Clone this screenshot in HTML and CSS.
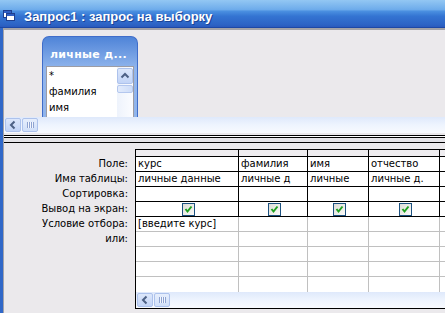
FILE: index.html
```html
<!DOCTYPE html>
<html lang="ru">
  <head>
    <meta charset="UTF-8" />
    <title>Запрос1 : запрос на выборку</title>
    <link rel="stylesheet" href="styles.css">
  </head>
  <body>
    <div class="win">
      <div class="titlebar">
        <svg class="ticon" viewBox="0 0 16 16" width="16" height="16">
          <rect x="0.5" y="2.5" width="8" height="7" fill="#fff" stroke="#1f3f8f" />
          <rect x="1" y="3" width="7" height="2" fill="#2f5fc4" />
          <rect x="3.5" y="5.5" width="8" height="7" fill="#fff" stroke="#1f3f8f" />
          <rect x="4" y="6" width="7" height="2" fill="#2f5fc4" />
        </svg>
        <span class="ttext">Запрос1 : запрос на выборку</span>
      </div>

      <div class="client">
        <div class="inner">
          <!-- таблицы -->
          <div class="tables">
            <div class="fieldlist">
              <div class="fl-head">личные д...</div>
              <div class="fl-body">
                <ul class="fl-items">
                  <li>*</li>
                  <li>фамилия</li>
                  <li>имя</li>
                </ul>
                <div class="vscroll">
                  <div class="sbtn up">
                    <svg viewBox="0 0 14 14" width="14" height="14"><polyline points="3.5,8.5 7,5 10.5,8.5" fill="none" stroke="#4d6185" stroke-width="2" /></svg>
                  </div>
                  <div class="vthumb"></div>
                </div>
              </div>
            </div>
          </div>

          <div class="hscroll">
            <div class="sbtn">
              <svg viewBox="0 0 14 12" width="14" height="12"><polyline points="8.5,2.5 5,6 8.5,9.5" fill="none" stroke="#4d6185" stroke-width="2" /></svg>
            </div>
            <div class="sthumb"><span class="grip"></span></div>
          </div>

          <div class="split"><div class="split-bar"></div></div>

          <!-- бланк запроса -->
          <div class="design">
            <div class="labels">
              <div class="lbl">Поле:</div>
              <div class="lbl">Имя таблицы:</div>
              <div class="lbl">Сортировка:</div>
              <div class="lbl">Вывод на экран:</div>
              <div class="lbl">Условие отбора:</div>
              <div class="lbl">или:</div>
            </div>
            <div class="grid">
              <div class="cells">
                <div class="row head">
                  <div class="cell c1"></div><div class="cell c2"></div><div class="cell c3"></div><div class="cell c4"></div><div class="cell c5"></div>
                </div>
                <div class="row">
                  <div class="cell c1">курс</div><div class="cell c2">фамилия</div><div class="cell c3">имя</div><div class="cell c4">отчество</div><div class="cell c5"></div>
                </div>
                <div class="row">
                  <div class="cell c1">личные данные</div><div class="cell c2">личные д</div><div class="cell c3">личные</div><div class="cell c4">личные д.</div><div class="cell c5"></div>
                </div>
                <div class="row">
                  <div class="cell c1"></div><div class="cell c2"></div><div class="cell c3"></div><div class="cell c4"></div><div class="cell c5"></div>
                </div>
                <div class="row">
                  <div class="cell c1"><span class="chk"><svg viewBox="0 0 11 11" width="11" height="11"><polyline points="2.5,5 4.5,7.5 8.5,2.5" fill="none" stroke="#21a121" stroke-width="2" /></svg></span></div>
                  <div class="cell c2"><span class="chk"><svg viewBox="0 0 11 11" width="11" height="11"><polyline points="2.5,5 4.5,7.5 8.5,2.5" fill="none" stroke="#21a121" stroke-width="2" /></svg></span></div>
                  <div class="cell c3"><span class="chk"><svg viewBox="0 0 11 11" width="11" height="11"><polyline points="2.5,5 4.5,7.5 8.5,2.5" fill="none" stroke="#21a121" stroke-width="2" /></svg></span></div>
                  <div class="cell c4"><span class="chk"><svg viewBox="0 0 11 11" width="11" height="11"><polyline points="2.5,5 4.5,7.5 8.5,2.5" fill="none" stroke="#21a121" stroke-width="2" /></svg></span></div>
                  <div class="cell c5"></div>
                </div>
                <div class="row g">
                  <div class="cell c1">[введите курс]</div><div class="cell c2"></div><div class="cell c3"></div><div class="cell c4"></div><div class="cell c5"></div>
                </div>
                <div class="row g">
                  <div class="cell c1"></div><div class="cell c2"></div><div class="cell c3"></div><div class="cell c4"></div><div class="cell c5"></div>
                </div>
                <div class="row g">
                  <div class="cell c1"></div><div class="cell c2"></div><div class="cell c3"></div><div class="cell c4"></div><div class="cell c5"></div>
                </div>
                <div class="row g">
                  <div class="cell c1"></div><div class="cell c2"></div><div class="cell c3"></div><div class="cell c4"></div><div class="cell c5"></div>
                </div>
                <div class="row g last">
                  <div class="cell c1"></div><div class="cell c2"></div><div class="cell c3"></div><div class="cell c4"></div><div class="cell c5"></div>
                </div>
              </div>
              <div class="hscroll gscroll">
                <div class="sbtn">
                  <svg viewBox="0 0 14 12" width="14" height="12"><polyline points="8.5,2.5 5,6 8.5,9.5" fill="none" stroke="#4d6185" stroke-width="2" /></svg>
                </div>
                <div class="sthumb"><span class="grip"></span></div>
              </div>
            </div>
          </div>
        </div>
      </div>
    </div>
  </body>
</html>
```

FILE: styles.css
```css
* {
  margin: 0;
  padding: 0;
  box-sizing: border-box;
}
body {
  width: 445px;
  height: 313px;
  overflow: hidden;
  background: #ebe9ec;
  font-family: "DejaVu Sans", sans-serif;
  font-size: 10px;
  color: #000;
}
.win {
  width: 445px;
  height: 313px;
  overflow: hidden;
  display: flex;
  flex-direction: column;
}

/* заголовок окна */
.titlebar {
  flex: none;
  height: 28px;
  display: flex;
  align-items: center;
  padding: 5px 0 0 3px;
  border-bottom: 1px solid #1d48a6;
  background: linear-gradient(to bottom, #93c7f3 0, #6eaceb 35%, #4a8fe0 42%, #3474d2 60%, #2d64c6 90%, #2a5abd 100%);
}
.ticon {
  flex: none;
  margin-right: 5px;
}
.ttext {
  color: #fff;
  font: bold 13px "Liberation Sans", sans-serif;
  white-space: nowrap;
  text-shadow: 1px 1px 0 #1a4396;
}

.client {
  flex: 1;
  min-height: 0;
  display: flex;
  border-left: 3px solid #3068c8;
}
.inner {
  flex: 1;
  min-width: 0;
  display: flex;
  flex-direction: column;
  border-top: 2px solid #a4a3a8;
  border-left: 1px solid #a4a3a8;
}

/* область таблиц */
.tables {
  flex: none;
  height: 87px;
  overflow: hidden;
  padding: 6px 0 0 38px;
}
.fieldlist {
  width: 96px;
  height: 120px;
  padding: 0 3px;
  border: 1px solid #3f6dca;
  border-bottom: none;
  border-radius: 7px 7px 0 0;
  background: linear-gradient(to bottom, #4f84d8 0, #78a3e5 20px, #91b5ec 32px, #8fb3ea 100%);
}
.fl-head {
  height: 29px;
  padding: 11px 0 0 4px;
  color: #fff;
  font-weight: bold;
  font-size: 11px;
  letter-spacing: 0.3px;
  white-space: nowrap;
  overflow: hidden;
}
.fl-body {
  display: flex;
  height: 80px;
  background: #fff;
  border: 1px solid #9c9ca4;
}
.fl-items {
  flex: 1;
  list-style: none;
  padding: 1px 0 0 2px;
  line-height: 16px;
}
.vscroll {
  flex: none;
  width: 16px;
  background: linear-gradient(to right, #eef3fc, #fbfcff);
}
.sbtn {
  flex: none;
  width: 16px;
  height: 14px;
  display: flex;
  align-items: center;
  justify-content: center;
  border: 1px solid #adc2ec;
  border-radius: 2px;
  background: linear-gradient(to bottom, #dce7fb, #c2d4f7);
}
.sbtn.up {
  height: 16px;
  margin-top: 1px;
}
.vthumb {
  height: 8px;
  margin-top: 1px;
  border: 1px solid #b4c7ee;
  border-radius: 2px;
  background: linear-gradient(to right, #e2ebfc, #cddcf8);
}

/* горизонтальная прокрутка */
.hscroll {
  flex: none;
  height: 16px;
  display: flex;
  align-items: center;
  gap: 1px;
  padding-left: 1px;
  background: linear-gradient(to bottom, #dfe9fb, #eef4fe 50%, #f8fafe);
}
.sthumb {
  flex: none;
  width: 16px;
  height: 14px;
  display: flex;
  align-items: center;
  justify-content: center;
  border: 1px solid #adc2ec;
  border-radius: 2px;
  background: linear-gradient(to bottom, #e6eefc, #d0dff9);
}
.grip {
  width: 7px;
  height: 6px;
  background: repeating-linear-gradient(to right, #8ea3d1 0 1px, #f4f7fe 1px 2px);
}

/* разделитель */
.split {
  flex: none;
  margin-top: 2px;
  padding-top: 1px;
  border-top: 1px solid #000;
  background: #fff;
}
.split-bar {
  height: 6px;
  border-top: 1px solid #000;
  border-bottom: 1px solid #000;
  background: #e4e3e7;
}

/* бланк */
.design {
  flex: 1;
  min-height: 0;
  display: flex;
  padding-top: 6px;
  overflow: hidden;
}
.labels {
  flex: none;
  width: 131px;
  padding: 8px 7px 0 0;
  text-align: right;
}
.lbl {
  height: 15px;
  line-height: 14px;
  white-space: nowrap;
}
.grid {
  flex: none;
  width: 420px;
  height: 160px;
  display: flex;
  flex-direction: column;
  border: 1px solid #000;
  border-right: none;
}
.cells {
  height: 142px;
  overflow: hidden;
  background: #fff;
}
.row {
  display: flex;
  height: 15px;
  border-bottom: 1px solid #000;
}
.row.head {
  height: 7px;
  background: #efedf0;
}
.row.g {
  border-bottom-color: #c0c0c0;
}
.row.last {
  border-bottom: none;
}
.cell {
  flex: none;
  height: 100%;
  padding-left: 2px;
  line-height: 14px;
  white-space: nowrap;
  overflow: hidden;
  border-right: 1px solid #000;
}
.row.g .cell {
  border-right-color: #c0c0c0;
}
.c1 { width: 103px; }
.c2 { width: 69px; }
.c3 { width: 61px; }
.c4 { width: 71px; }
.c5 { width: 100px; }
.chk {
  display: block;
  width: 13px;
  height: 13px;
  margin: 1px auto 0;
  border: 1px solid #1c5180;
  background: linear-gradient(135deg, #dcdcd6, #fbfbf9);
}
.chk svg {
  display: block;
}
.gscroll {
  padding-left: 1px;
}
```
